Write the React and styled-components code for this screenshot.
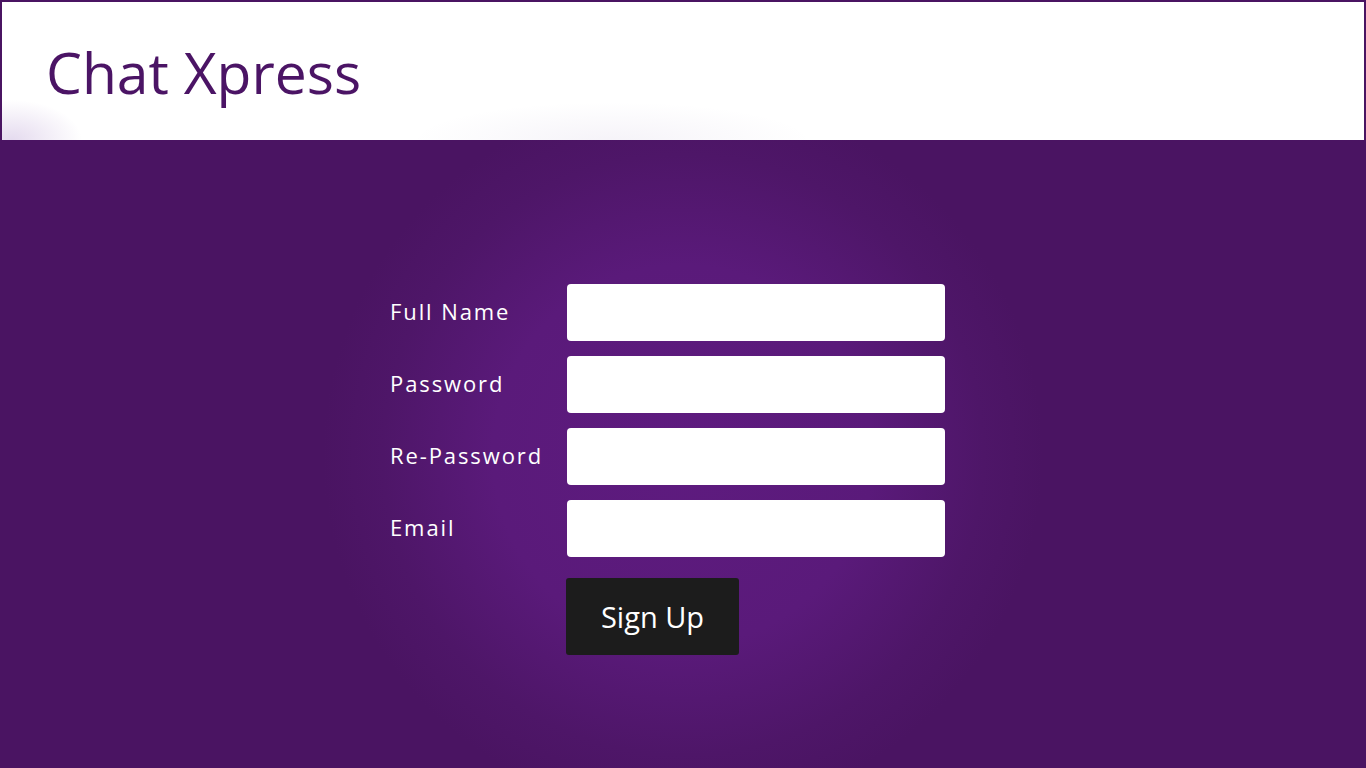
import React from 'react';
import styled, { createGlobalStyle } from 'styled-components';

const GlobalStyle = createGlobalStyle`
  html, body {
    margin: 0;
    padding: 0;
    height: 100%;
  }
  body {
    font-family: "Open Sans", "Noto Sans", sans-serif;
    background: #4a1462;
  }
  #root {
    min-height: 100vh;
  }
`

const Page = styled.div`
  min-height: 100vh;
  box-sizing: border-box;
  padding: 2px 2px 0;
  background: radial-gradient(circle at 683px 455px, #5e1b7f 0px, #5a1a7a 190px, #4e1668 300px, #4a1462 360px);
`

const Header = styled.header`
  height: 138px;
  box-sizing: border-box;
  padding-left: 44px;
  display: flex;
  align-items: center;
  background:
    radial-gradient(ellipse 70px 40px at 10px 138px, rgba(150, 110, 190, 0.25), rgba(255, 255, 255, 0) 100%),
    radial-gradient(ellipse 200px 40px at 610px 140px, rgba(130, 100, 170, 0.08), rgba(255, 255, 255, 0) 100%),
    #ffffff;
`

const Title = styled.h1`
  margin: 0;
  margin-top: 2px;
  font-weight: 400;
  font-size: 57px;
  color: #4b1465;
  letter-spacing: 0;
`

const Form = styled.form`
  width: 586px;
  margin: 144px auto 0;
  display: flex;
  flex-direction: column;
  gap: 15px;
`

const Row = styled.div`
  display: flex;
  align-items: center;
`

const Label = styled.label`
  width: 177px;
  color: #ffffff;
  font-size: 22px;
  letter-spacing: 1.9px;
  margin-top: -4px;
`

const Input = styled.input`
  width: 378px;
  height: 57px;
  box-sizing: border-box;
  border: none;
  border-radius: 4px;
  background: #ffffff;
  padding: 0 12px;
  font-family: inherit;
  font-size: 18px;
  outline: none;
`

const Button = styled.button`
  margin-top: 6px;
  margin-left: 176px;
  width: 173px;
  height: 77px;
  border: none;
  border-radius: 3px;
  background: #1c1c1c;
  color: #ffffff;
  font-family: inherit;
  font-size: 29px;
  align-self: flex-start;
  cursor: pointer;
`

const fields = [
  { label: 'Full Name', type: 'text' },
  { label: 'Password', type: 'password' },
  { label: 'Re-Password', type: 'password' },
  { label: 'Email', type: 'email' },
]

const App = () => {
  return (
    <Page>
      <GlobalStyle />
      <Header>
        <Title>Chat Xpress</Title>
      </Header>
      <Form onSubmit={e => e.preventDefault()}>
        {fields.map(f => (
          <Row key={f.label}>
            <Label>{f.label}</Label>
            <Input type={f.type} />
          </Row>
        ))}
        <Button type="submit">Sign Up</Button>
      </Form>
    </Page>
  );
}

export default App;
